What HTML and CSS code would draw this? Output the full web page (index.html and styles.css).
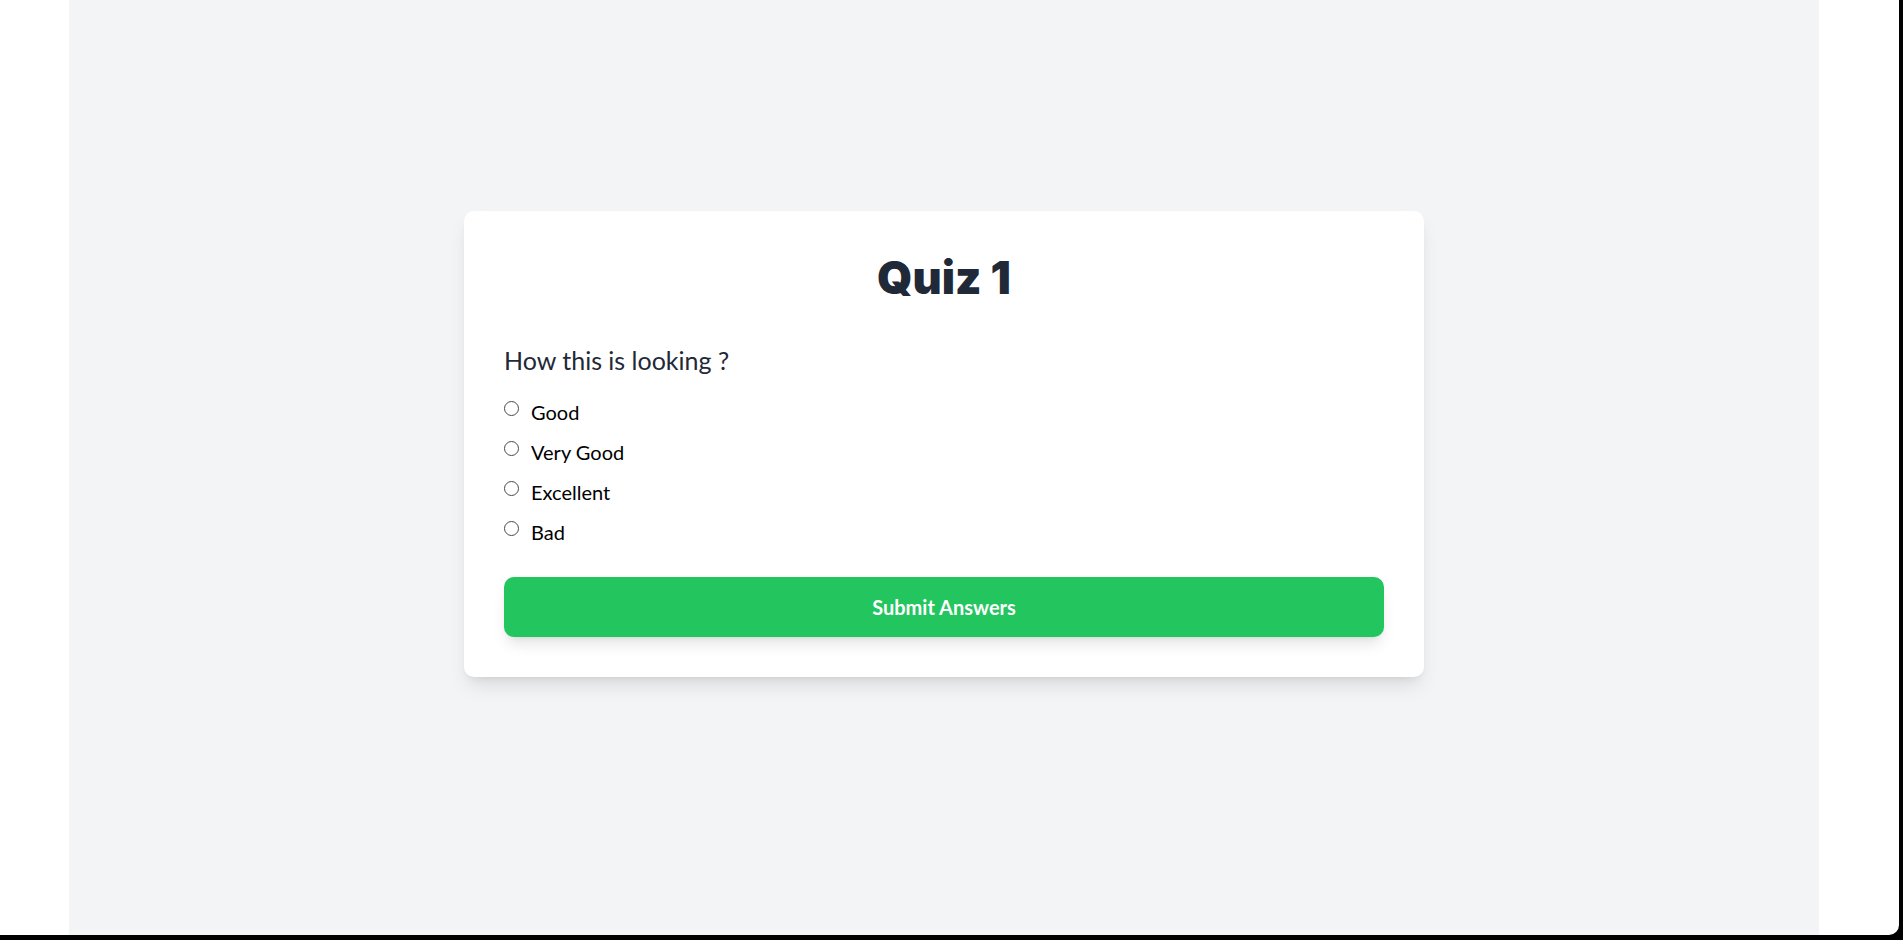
FILE: index.html
```html
<!DOCTYPE html>
<html lang="en">
<head>
<meta charset="utf-8">
<title>Quiz 1</title>
<link rel="stylesheet" href="styles.css">
</head>
<body>
<div class="window">
  <main class="panel">
    <form class="card">
      <h1 class="title">Quiz 1</h1>
      <div class="question">
        <p class="question-text">How this is looking ?</p>
        <div class="options">
          <label class="option"><input type="radio" name="q1" class="radio"><span>Good</span></label>
          <label class="option"><input type="radio" name="q1" class="radio"><span>Very Good</span></label>
          <label class="option"><input type="radio" name="q1" class="radio"><span>Excellent</span></label>
          <label class="option"><input type="radio" name="q1" class="radio"><span>Bad</span></label>
        </div>
      </div>
      <button type="button" class="submit">Submit Answers</button>
    </form>
  </main>
</div>
</body>
</html>
```
FILE: styles.css
```css
* { box-sizing: border-box; }

html, body {
  margin: 0;
  padding: 0;
  background: #000;
}

body {
  font-family: "Lato", "Noto Sans", sans-serif;
  width: 1903px;
  height: 940px;
  overflow: hidden;
}

.window {
  width: 1899px;
  height: 935px;
  background: #fff;
  border-bottom-right-radius: 10px;
  padding-left: 69px;
  overflow: hidden;
}

.panel {
  width: 1750px;
  height: 100%;
  background: #f3f4f6;
  padding-top: 211px;
  display: flex;
  flex-direction: column;
  align-items: center;
}

.card {
  width: 960px;
  background: #fff;
  border-radius: 10px;
  padding: 40px;
  box-shadow: 0 12px 19px -4px rgba(0, 0, 0, 0.1), 0 5px 8px -5px rgba(0, 0, 0, 0.1);
  display: flex;
  flex-direction: column;
}

.title {
  margin: 2px 0 40px;
  font-family: "Inter", "Lato", sans-serif;
  font-size: 45px;
  line-height: 50px;
  font-weight: 900;
  color: #1f2937;
  text-align: center;
}

.question-text {
  margin: 0 0 19px;
  font-size: 25px;
  line-height: 35px;
  font-weight: 400;
  color: #1f2937;
}

.options {
  display: flex;
  flex-direction: column;
  gap: 10px;
  margin-bottom: 30px;
}

.option {
  display: flex;
  align-items: flex-start;
  gap: 12px;
  font-size: 20px;
  line-height: 30px;
  color: #000;
}

.radio {
  appearance: none;
  -webkit-appearance: none;
  margin: 4px 0 0;
  width: 15px;
  height: 15px;
  flex: none;
  border: 1.3px solid #4a4a4a;
  border-radius: 50%;
  background: #fff;
}

.radio:checked {
  border-color: #2563eb;
  background: radial-gradient(circle, #2563eb 0 4px, #fff 4.5px);
}

.submit {
  width: 100%;
  height: 60px;
  border: none;
  border-radius: 10px;
  background: #22c55e;
  color: #fff;
  font-family: inherit;
  font-size: 20px;
  line-height: 30px;
  font-weight: 700;
  box-shadow: 0 10px 15px -3px rgba(0, 0, 0, 0.1), 0 4px 6px -4px rgba(0, 0, 0, 0.1);
  cursor: pointer;
}
```
